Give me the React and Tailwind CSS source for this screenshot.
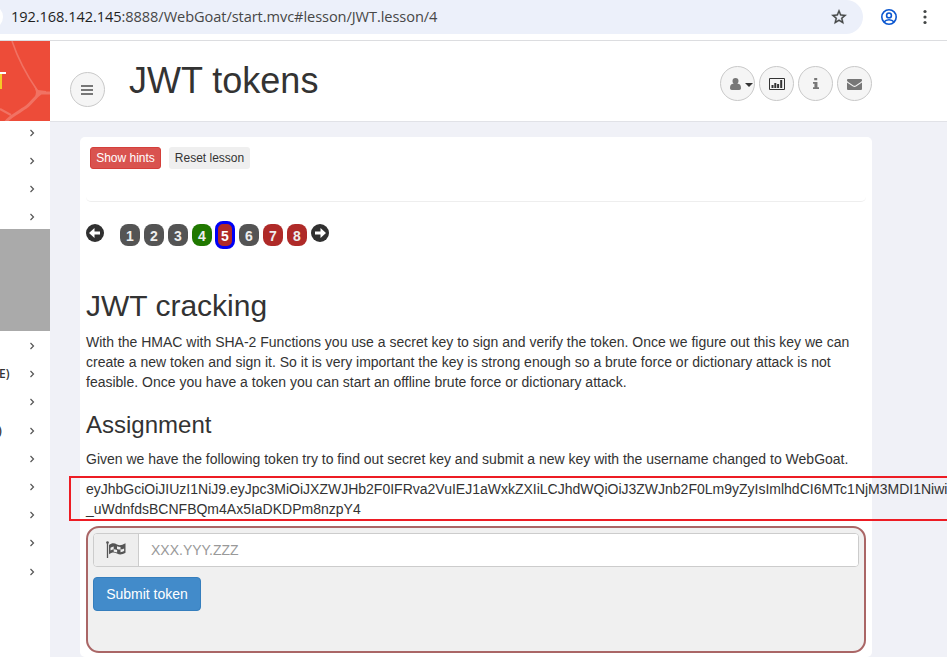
import React from 'react';

const PAGES = [
  { n: 1, tone: 'bg-[#545454]' },
  { n: 2, tone: 'bg-[#545454]' },
  { n: 3, tone: 'bg-[#545454]' },
  { n: 4, tone: 'bg-[#207800]' },
  { n: 5, tone: 'bg-[#af2a28]', active: true },
  { n: 6, tone: 'bg-[#545454]' },
  { n: 7, tone: 'bg-[#af2a28]' },
  { n: 8, tone: 'bg-[#af2a28]' },
];

function Chevron() {
  return (
    <svg className="ml-[29px] h-2 w-[6px] shrink-0" viewBox="0 0 6 8" fill="none" stroke="#555" strokeWidth="1.2">
      <path d="M1.500 1l3 3-3 3" />
    </svg>
  );
}

function AddressBar() {
  return (
    <div className="flex h-[41px] items-start border-b border-[#dcdde0] bg-white">
      <div className="relative flex h-[34px] w-[863px] items-center overflow-hidden rounded-r-full bg-[#ecf0fa]">
        <div className="absolute -left-[21px] top-[5px] size-6 rounded-full bg-white" />
        <span className="-mt-[2px] ml-[11px] whitespace-nowrap font-['Open_Sans','Noto_Sans',sans-serif] text-[14.6px] leading-[34px] tracking-[-0.075px] text-[#474747]">
          <span className="text-[#1f1f1f]">192.168.142.145</span>:8888/WebGoat/start.mvc#lesson/JWT.lesson/4
        </span>
        <svg className="absolute left-[830px] top-[8px] size-[18px]" viewBox="0 0 24 24" fill="#444746" stroke="#444746" strokeWidth="0.5">
          <path d="M22 9.240l-7.190-.62L12 2 9.190 8.630 2 9.240l5.460 4.730L5.820 21 12 17.270 18.180 21l-1.630-7.030L22 9.240zM12 15.400l-3.760 2.270 1-4.280-3.320-2.880 4.380-.38L12 6.100l1.710 4.040 4.380.38-3.320 2.880 1 4.280L12 15.400z" />
        </svg>
      </div>
      <svg className="ml-[18px] mt-[9px] size-4" viewBox="0 0 16 16" fill="none" stroke="#0b57d0" strokeWidth="1.6">
        <circle cx="8" cy="8" r="7.2" />
        <circle cx="8" cy="6.4" r="2.4" />
        <path d="M3 13c1.200-1.600 3-2.300 5-2.300s3.800.7 5 2.300" />
      </svg>
      <svg className="ml-[26px] mt-[9px] h-4 w-[4px]" viewBox="0 0 4 16" fill="#444746">
        <circle cx="2" cy="2.5" r="1.6" />
        <circle cx="2" cy="8" r="1.6" />
        <circle cx="2" cy="13.5" r="1.6" />
      </svg>
    </div>
  );
}

function Sidebar() {
  const labels = ['', 'E)', '', ')', '', '', '', '', ''];
  return (
    <aside className="w-[50px] shrink-0 overflow-hidden bg-white">
      <div className="relative h-20 overflow-hidden bg-[#ed4c39]">
        <svg className="absolute inset-0 h-20 w-[50px]" viewBox="0 0 50 80" fill="none" stroke="#f17263">
          <path d="M12 0C18 18 28 36 37 49" strokeWidth="1.6" />
          <path d="M50 52H41C33 57 31 64 23 68 15 74 9 76 5 82" strokeWidth="3" />
          <path d="M0 68l11 6" strokeWidth="2" />
          <path d="M34 44l4 5 8 1v3h-5l-6 4 1-6z" fill="#f17263" stroke="none" />
        </svg>
        <div className="absolute left-0 top-[31px] h-[2px] w-[6px] bg-white" />
        <div className="absolute left-0 top-[33px] h-[15px] w-[1.500px] bg-[#f5c927]" />
      </div>
      {[0, 1, 2, 3].map((i) => (
        <div key={i} className="flex h-7 items-start pt-2">
          <Chevron />
        </div>
      ))}
      <div className="-mt-1 h-[102px] bg-[#aaaaaa]" />
      {labels.map((t, i) => (
        <div key={i} className="relative flex h-[28.2px] items-start pt-[11px]">
          {t && (
            <span
              className={
                t === 'E)'
                  ? "absolute -left-px top-[6px] font-['Open_Sans',sans-serif] text-xs font-semibold leading-[18px] text-[#333]"
                  : "absolute -left-[2px] top-[6px] font-['Open_Sans',sans-serif] text-xs font-semibold leading-[18px] text-[#333]"
              }
            >
              {t}
            </span>
          )}
          <Chevron />
        </div>
      ))}
    </aside>
  );
}

function RoundButton({ children }) {
  return (
    <button className="flex size-[35px] items-center justify-center rounded-full border border-[#c9c9c9] bg-[#f5f5f5] text-[#777]">
      {children}
    </button>
  );
}

function Header() {
  return (
    <header className="flex h-[81px] items-start border-b border-[#e1e2e7] bg-white pl-5">
      <div className="pt-[31px]">
        <RoundButton>
          <svg className="-ml-px h-[10px] w-3" viewBox="0 0 12 10" fill="currentColor" shapeRendering="crispEdges">
            <path d="M0 0h12v2H0zM0 4h12v2H0zM0 8h12v2H0z" />
          </svg>
        </RoundButton>
      </div>
      <h1 className="ml-6 mt-5 w-[591px] text-[36px] leading-10 text-[#333]">JWT tokens</h1>
      <div className="mt-[25px] flex gap-1">
        <RoundButton>
          <svg className="ml-[7px] h-3 w-[11px] shrink-0" viewBox="0 0 11 12" fill="currentColor">
            <path d="M5.500 0a3 3 0 013 3c0 1.200-.5 2.300-1.300 2.900C9.400 5.600 11 7 11 10c0 1.300-.7 2-1.800 2H1.800C.7 12 0 11.300 0 10c0-3 1.600-4.400 3.800-4.100C3 5.300 2.500 4.200 2.500 3a3 3 0 013-3z" />
          </svg>
          <svg className="ml-1 mt-[2px] h-1 w-2 shrink-0" viewBox="0 0 8 4" fill="#333">
            <path d="M0 0h8L4 4z" />
          </svg>
        </RoundButton>
        <RoundButton>
          <svg className="h-3 w-4 shrink-0" viewBox="0 0 16 12" fill="#333">
            <path fillRule="evenodd" d="M1 0h14q1 0 1 1v10q0 1-1 1H1q-1 0-1-1V1q0-1 1-1zm0 1v10h14V1z" />
            <path d="M2.500 7h2v3h-2zM5.300 5h2v5h-2zM8.100 6h2v4h-2zM11.200 2h2v8h-2z" />
          </svg>
        </RoundButton>
        <RoundButton>
          <svg className="h-[11px] w-[6px]" viewBox="0 0 5 11" preserveAspectRatio="none" fill="currentColor">
            <path d="M1 0h2.500v2.300H1zM0 4h3.700v5.300H5V11H0V9.300h1.200V5.700H0z" />
          </svg>
        </RoundButton>
        <RoundButton>
          <svg className="mt-px h-[11px] w-[15px] shrink-0" viewBox="0 0 15 11" fill="currentColor">
            <path d="M1 0h13q1 0 1 1c0 1-.5 1.500-1.200 2L8.600 6.500q-1.100.7-2.200 0L1.200 3C.5 2.500 0 2 0 1q0-1 1-1z" />
            <path d="M0 3.400l6 4.100q1.500.9 3 0l6-4.100V10q0 1-1 1H1q-1 0-1-1z" />
          </svg>
        </RoundButton>
      </div>
    </header>
  );
}

function PageArrow({ left }) {
  return (
    <svg className="mt-[3px] size-[18px] shrink-0" viewBox="0 0 18 18">
      <circle cx="9" cy="9" r="9" fill="#303030" />
      <path
        d={left ? 'M3 9l5.500-5v3.500H14v3H8.500V14z' : 'M15 9L9.500 4v3.500H4v3h5.500V14z'}
        fill="#fff"
      />
    </svg>
  );
}

function Pager() {
  return (
    <div className="mt-[19px] flex h-7 items-start">
      <PageArrow left />
      <div className="ml-4 mr-1 flex w-[187px] justify-between">
        {PAGES.map((p) =>
          p.active ? (
            <div key={p.n} className="-ml-px flex h-7 w-5 items-center justify-center rounded-[8px] border-[3px] border-[#0000f5] bg-[#af2a28] pt-[2px] text-sm font-bold leading-none text-white">
              {p.n}
            </div>
          ) : (
            <div key={p.n} className={`mt-[3px] flex h-[22px] w-5 items-center justify-center rounded-[8px] pt-[2px] text-sm font-bold leading-none text-[#eee] ${p.tone}`}>
              {p.n}
            </div>
          )
        )}
      </div>
      <PageArrow />
    </div>
  );
}

function AnswerForm() {
  return (
    <div className="mt-[7px] h-[127px] rounded-[13px] border-2 border-[#a66] bg-[#f0f0f0] px-[5px] pt-[5px]">
      <div className="flex h-[34px] overflow-hidden rounded border border-[#ccc] bg-white">
        <div className="flex w-[45px] shrink-0 items-center justify-center border-r border-[#ccc] bg-[#eee]">
          <svg className="h-[18px] w-5" viewBox="0 0 20 18">
            <path d="M1.500 1v16" stroke="#555" strokeWidth="1.3" />
            <circle cx="1.5" cy="1.5" r="1.3" fill="#555" />
            <path d="M3 4c3-2.500 5.500-2 8-.5 3 1.500 5 .5 8.500-1.200v9.400c-3.500 1.800-5.500 2.300-8.500.8-2.500-1.200-5-1.500-8 .8z" fill="#555" />
            <path d="M4.500 6.800q1.600-1 3.200-1.200v2.600q-1.600.2-3.200 1.200zM7.700 8.200q1.700 0 3.400.8v2.600q-1.700-.8-3.400-.9zM11 5.200q1.800.9 3.500.8v2.600q-1.700.1-3.500-.7zM14.500 8.600q1.800-.2 3.600-1.100V10q-1.800 1-3.600 1.200z" fill="#eee" />
          </svg>
        </div>
        <input className="w-full bg-white px-3 text-sm text-[#555] outline-none placeholder:text-[#999]" placeholder="XXX.YYY.ZZZ" />
      </div>
      <button className="mt-[10px] h-[34px] w-[108px] rounded border border-[#357ebd] bg-[#428bca] text-sm text-white">
        Submit token
      </button>
    </div>
  );
}

function Lesson() {
  return (
    <section className="ml-[30px] mt-[15px] h-[520px] w-[792px] rounded-[5px] bg-white px-[6px]">
      <div className="flex h-[65px] items-start gap-2 rounded-[5px] border-b border-[#eee] pl-1 pt-[10px] text-xs">
        <button className="h-[22px] w-[71px] rounded-[3px] border border-[#d43f3a] bg-[#d9534f] text-white">Show hints</button>
        <button className="h-[22px] w-[81px] rounded-[3px] bg-[#efefef] text-[#333]">Reset lesson</button>
      </div>
      <Pager />
      <h2 className="mt-10 text-[30px] leading-[33px]">JWT cracking</h2>
      <p className="mt-[10px] whitespace-nowrap">
        With the HMAC with SHA-2 Functions you use a secret key to sign and verify the token. Once we figure out this key we can
        <br />
        create a new token and sign it. So it is very important the key is strong enough so a brute force or dictionary attack is not
        <br />
        feasible. Once you have a token you can start an offline brute force or dictionary attack.
      </p>
      <h3 className="mt-5 text-2xl leading-[26px]">Assignment</h3>
      <p className="mt-[11px] whitespace-nowrap">
        Given we have the following token try to find out secret key and submit a new key with the username changed to WebGoat.
      </p>
      <div className="relative mt-[10px] h-10 whitespace-nowrap">
        eyJhbGciOiJIUzI1NiJ9.eyJpc3MiOiJXZWJHb2F0IFRva2VuIEJ1aWxkZXIiLCJhdWQiOiJ3ZWJnb2F0Lm9yZyIsImlhdCI6MTc1NjM3MDI1Niwi
        <br />
        _uWdnfdsBCNFBQm4Ax5IaDKDPm8nzpY4
        <div className="absolute -left-[17px] -top-[3px] h-[45px] w-[900px] border-2 border-[#ed1c24]" />
      </div>
      <AnswerForm />
    </section>
  );
}

export default function App() {
  return (
    <div className="h-[657px] w-[947px] overflow-hidden bg-white font-['Liberation_Sans',Arial,sans-serif] text-sm leading-5 text-[#333]">
      <AddressBar />
      <div className="flex h-[616px]">
        <Sidebar />
        <main className="min-w-0 flex-1 overflow-hidden bg-[#f0f1f7]">
          <Header />
          <Lesson />
        </main>
      </div>
    </div>
  );
}
